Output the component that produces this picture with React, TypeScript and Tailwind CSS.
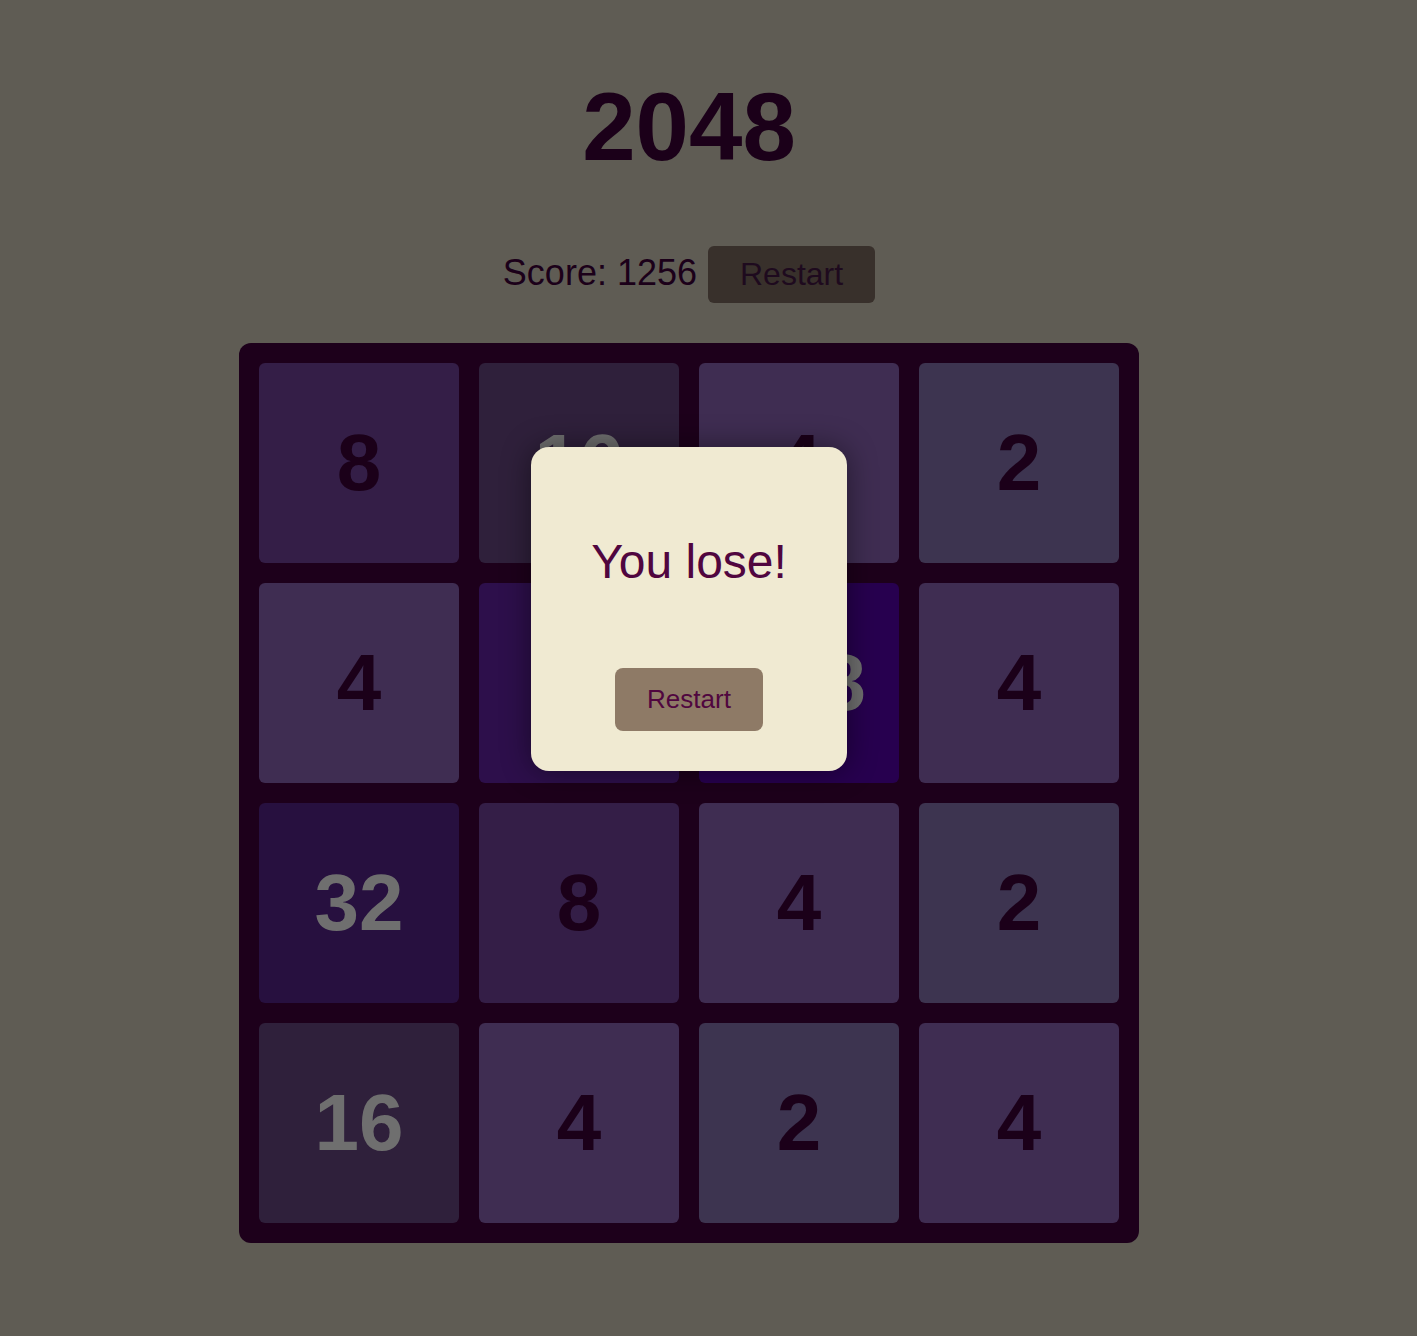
import React from 'react';

const BOARD = [
  [8, 16, 4, 2],
  [4, 64, 128, 4],
  [32, 8, 4, 2],
  [16, 4, 2, 4],
];

const TILE_STYLES: Record<number, string> = {
  2: 'bg-[#3d3450] text-[#1b0019]',
  4: 'bg-[#3f2d52] text-[#1b0019]',
  8: 'bg-[#341e47] text-[#1b0019]',
  16: 'bg-[#2f203b] text-[#6f6f6f]',
  32: 'bg-[#27103f] text-[#6f6f6f]',
  64: 'bg-[#2d0f4b] text-[#6f6f6f]',
  128: 'bg-[#27004f] text-[#6f6f6f]',
};

const Tile: React.FC<{ value: number }> = ({ value }) => (
  <div
    className={`w-[200px] h-[200px] rounded-[6px] flex items-center justify-center font-bold text-[80px] leading-none ${TILE_STYLES[value]}`}
  >
    {value}
  </div>
);

const LoseModal: React.FC = () => (
  <div className="absolute top-[104px] left-1/2 -translate-x-1/2 w-[316px] bg-[#f0ead2] rounded-[18px] shadow-[0_0_30px_rgba(0,0,0,0.45)] flex flex-col items-center pt-[87px] pb-[40px]">
    <p className="text-[48px] leading-[1.15] text-[#50063f]">You lose!</p>
    <button className="mt-[79px] bg-[#8e7a66] text-[#50063f] text-[26px] leading-[31px] px-[32px] py-[16px] rounded-[8px]">
      Restart
    </button>
  </div>
);

export default function App() {
  return (
    <div
      className="min-h-screen bg-[#5f5c54] flex flex-col items-center pr-[39px] pt-[79px] pb-[93px]"
      style={{ fontFamily: '"Liberation Sans", Arial, sans-serif' }}
    >
      <h1 className="text-[96px] leading-none font-bold text-[#1b0019]">2048</h1>

      <div className="mt-[71px] flex items-baseline gap-[11px] leading-[1.15]">
        <span className="text-[36px] text-[#1b0019]">Score: 1256</span>
        <button className="bg-[#38302b] text-[#1e0a1e] text-[32px] leading-[1.15] px-[32px] py-[10px] rounded-[6px]">
          Restart
        </button>
      </div>

      <div className="relative mt-[40px] bg-[#1d001b] rounded-[12px] p-[20px] grid grid-cols-4 gap-[20px]">
        {BOARD.flat().map((v, i) => (
          <Tile key={i} value={v} />
        ))}
        <LoseModal />
      </div>
    </div>
  );
}
